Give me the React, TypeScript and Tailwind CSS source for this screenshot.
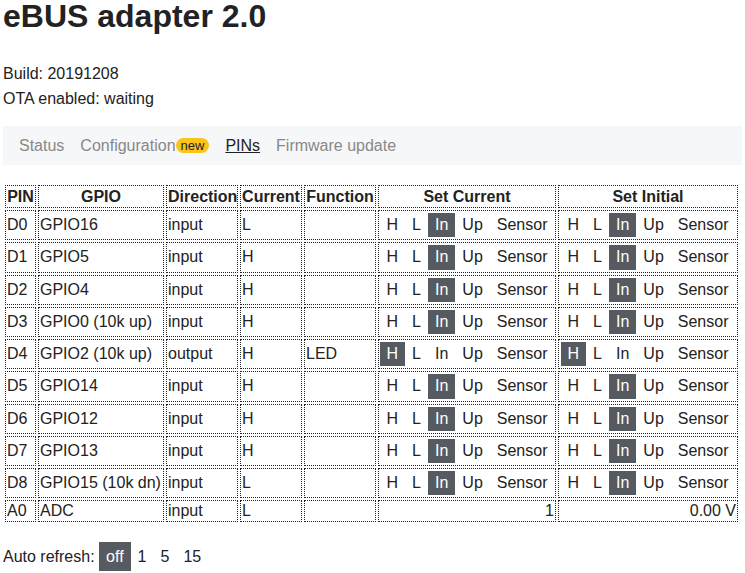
import React from "react";

type Row = {
  pin: string;
  gpio: string;
  dir: string;
  cur: string;
  fn: string;
  setCur?: string;
  setInit?: string;
  analog?: [string, string];
};

const rows: Row[] = [
  { pin: "D0", gpio: "GPIO16", dir: "input", cur: "L", fn: "", setCur: "In", setInit: "In" },
  { pin: "D1", gpio: "GPIO5", dir: "input", cur: "H", fn: "", setCur: "In", setInit: "In" },
  { pin: "D2", gpio: "GPIO4", dir: "input", cur: "H", fn: "", setCur: "In", setInit: "In" },
  { pin: "D3", gpio: "GPIO0 (10k up)", dir: "input", cur: "H", fn: "", setCur: "In", setInit: "In" },
  { pin: "D4", gpio: "GPIO2 (10k up)", dir: "output", cur: "H", fn: "LED", setCur: "H", setInit: "H" },
  { pin: "D5", gpio: "GPIO14", dir: "input", cur: "H", fn: "", setCur: "In", setInit: "In" },
  { pin: "D6", gpio: "GPIO12", dir: "input", cur: "H", fn: "", setCur: "In", setInit: "In" },
  { pin: "D7", gpio: "GPIO13", dir: "input", cur: "H", fn: "", setCur: "In", setInit: "In" },
  { pin: "D8", gpio: "GPIO15 (10k dn)", dir: "input", cur: "L", fn: "", setCur: "In", setInit: "In" },
  { pin: "A0", gpio: "ADC", dir: "input", cur: "L", fn: "", analog: ["1", "0.00 V"] },
];

const opts = ["H", "L", "In", "Up", "Sensor"];

function Group({ active }: { active: string }) {
  return (
    <div className="flex justify-center py-[1px]">
      {opts.map((o) => (
        <span
          key={o}
          className={
            o === active
              ? "px-[7px] h-[24.25px] leading-[24px] bg-[#565b61] text-white"
              : "px-[7px] h-[24.25px] leading-[24px] text-[#222]"
          }
        >
          {o}
        </span>
      ))}
    </div>
  );
}

const cell = "border border-dotted border-[#222] p-[1px]";

export default function App() {
  return (
    <div
      className="px-[3px] text-[16px] text-[#222] bg-white min-h-[573px]"
      style={{ fontFamily: '"Liberation Sans", Arial, sans-serif' }}
    >
      <h1 className="text-[32px] leading-[33px] font-bold">eBUS adapter 2.0</h1>
      <div className="mt-[28px] leading-[25px]">
        <div>Build: 20191208</div>
        <div>OTA enabled: waiting</div>
      </div>
      <nav className="mt-[15px] bg-[#f6f7f8] px-[8px] flex items-center h-[39px] leading-[19px]">
        <span className="px-[8px] text-[#888]">Status</span>
        <span className="px-[8px] text-[#888] flex items-center">
          Configuration
          <span className="bg-[#fcc419] text-[#222] text-[13px] leading-[15px] px-[5px] rounded-full -mt-[1px]">
            new
          </span>
        </span>
        <span className="px-[8px] text-[#222] underline">PINs</span>
        <span className="px-[8px] text-[#888]">Firmware update</span>
      </nav>
      <table className="mt-[18px] border-separate border-spacing-[2px] table-fixed w-[737px]">
        <thead>
          <tr className="leading-[19px]">
            <th className={`${cell} w-[31px]`}>PIN</th>
            <th className={`${cell} w-[126px]`}>GPIO</th>
            <th className={`${cell} w-[72px]`}>Direction</th>
            <th className={`${cell} w-[62px]`}>Current</th>
            <th className={`${cell} w-[72px]`}>Function</th>
            <th className={`${cell} w-[178px]`}>Set Current</th>
            <th className={`${cell} w-[180px]`}>Set Initial</th>
          </tr>
        </thead>
        <tbody>
          {rows.map((r) => (
            <tr key={r.pin} className="leading-[18px]">
              <td className={cell}>{r.pin}</td>
              <td className={`${cell} whitespace-nowrap`}>{r.gpio}</td>
              <td className={cell}>{r.dir}</td>
              <td className={cell}>{r.cur}</td>
              <td className={cell}>{r.fn}</td>
              {r.analog ? (
                <>
                  <td className={`${cell} text-right`}>{r.analog[0]}</td>
                  <td className={`${cell} text-right`}>{r.analog[1]}</td>
                </>
              ) : (
                <>
                  <td className={`${cell} p-0`}>
                    <Group active={r.setCur!} />
                  </td>
                  <td className={`${cell} p-0`}>
                    <Group active={r.setInit!} />
                  </td>
                </>
              )}
            </tr>
          ))}
        </tbody>
      </table>
      <div className="mt-[18px] flex items-center">
        <span className="mr-[4.5px]">Auto refresh:</span>
        <span className="px-[7px] py-[5px] leading-[19px] bg-[#565b61] text-white">off</span>
        <span className="px-[7px] py-[5px] leading-[19px]">1</span>
        <span className="px-[7px] py-[5px] leading-[19px]">5</span>
        <span className="px-[7px] py-[5px] leading-[19px]">15</span>
      </div>
    </div>
  );
}
